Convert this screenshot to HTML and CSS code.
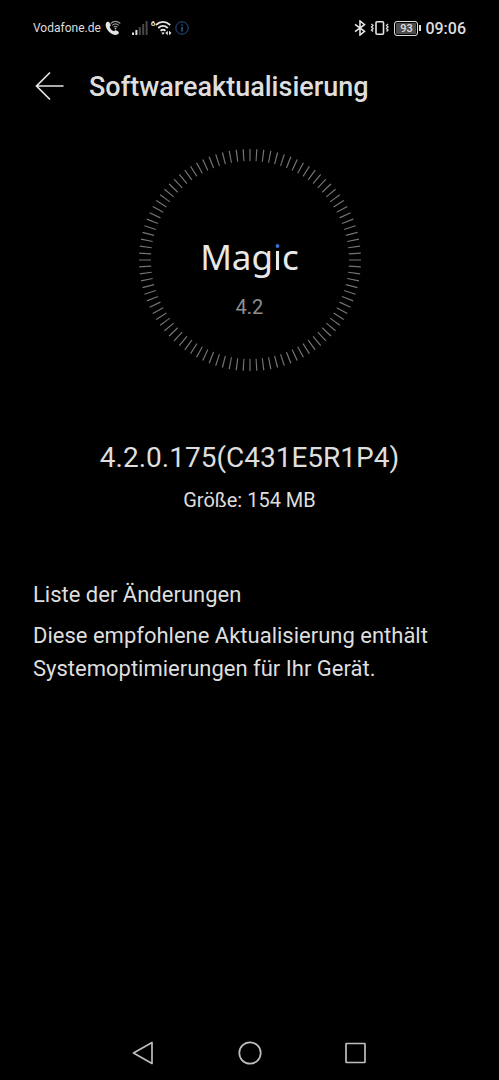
FILE: index.html
```html
<!DOCTYPE html>
<html lang="de">
<head>
<meta charset="utf-8">
<meta name="viewport" content="width=device-width, initial-scale=1">
<title>Softwareaktualisierung</title>
<link rel="stylesheet" href="styles.css">
</head>
<body>
<div class="screen">
  <div class="status">
    <div class="status-group">
      <span class="carrier">Vodafone.de</span>
      <svg class="call" width="16" height="16" viewBox="0 0 16 16" aria-hidden="true">
        <path d="M1 3.200C1.800 1.600 3.600 1.300 4.400 2.600L5.600 4.800C6 5.700 4.900 6.300 4.700 7C5.200 8.700 6.800 10.400 8.700 11.100C9.500 10.800 10 9.900 11 10.200L13.300 11.600C14.300 12.400 13.700 14.100 12.300 14.600C7 16.500-1 8.500 1 3.200Z" fill="#e4e4e4"/>
        <g fill="none" stroke="#999" stroke-width="1.100"><path d="M5.700 3.500Q10.500-.8 15.300 3.500M7.200 5.300Q10.500 2.300 13.800 5.300M8.700 7.100Q10.500 5.500 12.300 7.100"/></g>
        <circle cx="10.500" cy="8.500" r=".9" fill="#aaa"/>
      </svg>
      <svg class="signal" width="16" height="16" viewBox="0 0 16 16" aria-hidden="true">
        <path d="M0 12.500h2V15H0zM3.400 10h2v5h-2z" fill="#ddd"/>
        <path d="M6.800 7h2v8h-2zM10.200 4h2v11h-2zM13.600 1h2v14h-2z" fill="#484848"/>
      </svg>
      <span class="wifi">
        <span class="wifi-gen">6</span>
        <svg width="17" height="16" viewBox="0 0 17 16" aria-hidden="true">
          <path d="M.8 5Q8-1.200 15.200 5M3.200 8Q8 3.800 12.800 8M5.500 10.800Q8 8.800 10.500 10.800" fill="none" stroke="#e4e4e4" stroke-width="1.800"/>
          <path d="M6.300 12.800Q8 11.600 9.700 12.800L8 14.800ZM10.300 13l2.500-2.200v4.400zM16.500 13L14 10.800v4.400z" fill="#e4e4e4"/>
        </svg>
      </span>
      <svg class="info" width="14" height="14" viewBox="0 0 14 14" aria-hidden="true">
        <circle cx="7" cy="7" r="6.200" fill="none" stroke="#2a5194"/>
        <path d="M7 6v4.500M7 3.500v1.300" stroke="#3b68b8" stroke-width="1.300"/>
      </svg>
    </div>
    <div class="status-group">
      <svg class="bluetooth" width="12" height="16" viewBox="0 0 12 16" aria-hidden="true">
        <path d="M1 4.300L10.500 11.300L6 15V1L10.500 4.700L1 11.700" fill="none" stroke="#e4e4e4" stroke-width="1.600"/>
      </svg>
      <svg class="vibrate" width="20" height="16" viewBox="0 0 20 16" aria-hidden="true">
        <rect x="6" y="1.800" width="7.500" height="12.400" rx="1" fill="none" stroke="#e4e4e4" stroke-width="1.600"/>
        <path d="M1.500 4L3 5.500L1.500 7L3 8.500L1.500 10L3 11.500M18 4L16.500 5.500L18 7L16.500 8.500L18 10L16.500 11.500" fill="none" stroke="#ddd" stroke-width="1.400"/>
      </svg>
      <span class="battery"><span class="battery-level">93</span></span>
      <time class="clock">09:06</time>
    </div>
  </div>

  <header class="header">
    <button class="back" type="button" aria-label="Zurück">
      <svg width="30" height="30" viewBox="0 0 30 30"><path d="M15 1.500L1.500 15L15 28.500M1.500 15H28.500" fill="none" stroke="#e4e4e4" stroke-width="1.700"/></svg>
    </button>
    <h1 class="title">Softwareaktualisierung</h1>
  </header>

  <main class="content">
    <section class="dial">
      <svg class="dial-ring" viewBox="0 0 224 224" aria-hidden="true">
        <circle cx="112" cy="112" r="105" pathLength="1000" fill="none" stroke="#747474" stroke-width="12" stroke-dasharray="1.800 8.200" stroke-dashoffset=".9"/>
      </svg>
      <div class="dial-text">
        <div class="logo">Mag<span class="logo-i">i</span>c</div>
        <div class="dial-version">4.2</div>
      </div>
    </section>
    <h2 class="build">4.2.0.175(C431E5R1P4)</h2>
    <p class="size">Größe: 154 MB</p>
    <section class="changes">
      <h3 class="changes-title">Liste der Änderungen</h3>
      <p class="changes-text">Diese empfohlene Aktualisierung enthält Systemoptimierungen für Ihr Gerät.</p>
    </section>
  </main>

  <nav class="navbar">
    <button type="button" aria-label="Zurück"><svg width="24" height="26" viewBox="0 0 24 26"><path d="M20 2.500V23.500L1.500 13Z" fill="none" stroke="#bebebe" stroke-width="1.700" stroke-linejoin="round"/></svg></button>
    <button type="button" aria-label="Startbildschirm"><svg width="24" height="26" viewBox="0 0 24 26"><circle cx="12" cy="13" r="10.700" fill="none" stroke="#bebebe" stroke-width="1.700"/></svg></button>
    <button type="button" aria-label="Letzte Apps"><svg width="24" height="26" viewBox="0 0 24 26"><rect x="2" y="3.500" width="19" height="19" rx=".5" fill="none" stroke="#bebebe" stroke-width="1.700"/></svg></button>
  </nav>
</div>
</body>
</html>
```
FILE: styles.css
```css
* { box-sizing: border-box; }
body {
  margin: 0;
  background: #000;
  color: #dedede;
  font-family: Roboto, "Liberation Sans", sans-serif;
}
h1, h2, h3, p { margin: 0; font-weight: 400; }
button { padding: 0; border: 0; background: none; cursor: pointer; }
svg { display: block; flex: none; }

.screen {
  display: flex;
  flex-direction: column;
  min-height: 100vh;
}

.status {
  display: flex;
  justify-content: space-between;
  align-items: center;
  height: 56px;
  padding: 0 33px;
}
.status-group { display: flex; align-items: center; }
.carrier { font-size: 12px; }
.call { margin-left: 4px; }
.signal { margin-left: 11px; }
.wifi { display: flex; align-items: center; margin-left: 3px; }
.wifi-gen {
  align-self: flex-start;
  font-size: 8px;
  line-height: 8px;
  font-weight: 700;
}
.info { margin-left: 3px; }
.vibrate { margin-left: 4px; }
.battery {
  display: flex;
  align-items: center;
  gap: 1px;
  margin: 0 4px;
}
.battery::after {
  content: "";
  width: 2px;
  height: 6px;
  background: #ddd;
}
.battery-level {
  width: 24px;
  height: 15px;
  border: 1px solid #ddd;
  border-radius: 3px;
  background: #4c4c4c;
  box-shadow: inset 0 0 0 1px #000;
  font-size: 11px;
  line-height: 13px;
  font-weight: 500;
  text-align: center;
}
.clock { font-size: 16px; font-weight: 500; }

.header {
  display: flex;
  align-items: center;
  gap: 24px;
  height: 60px;
  padding: 0 35px;
}
.title { padding-top: 2px; font-size: 27px; font-weight: 500; }

.content {
  display: flex;
  flex-direction: column;
  flex: 1;
  align-items: center;
  padding: 32px 33px 0;
}
.dial { display: grid; width: 224px; }
.dial-ring, .dial-text { grid-area: 1 / 1; }
.dial-text { padding-top: 87px; text-align: center; }
.logo {
  font-family: "Noto Sans", sans-serif;
  font-size: 35px;
  line-height: 44px;
  color: #e8e8e8;
}
.logo-i {
  background: linear-gradient(#3a72dc 34%, #e8e8e8 34%);
  background-clip: text;
  -webkit-background-clip: text;
  color: transparent;
}
.dial-version {
  margin-top: 16px;
  font-size: 20px;
  line-height: 24px;
  color: #8e8e8e;
}
.build { margin-top: 68px; font-size: 28px; line-height: 36px; }
.size { margin-top: 12px; font-size: 20px; line-height: 24px; }
.changes { align-self: stretch; margin-top: 66px; font-size: 22px; line-height: 33px; }
.changes-title { font-size: 22px; }
.changes-text { margin-top: 8px; }

.navbar {
  display: flex;
  justify-content: center;
  gap: 82px;
  padding: 14px 0;
}
```
